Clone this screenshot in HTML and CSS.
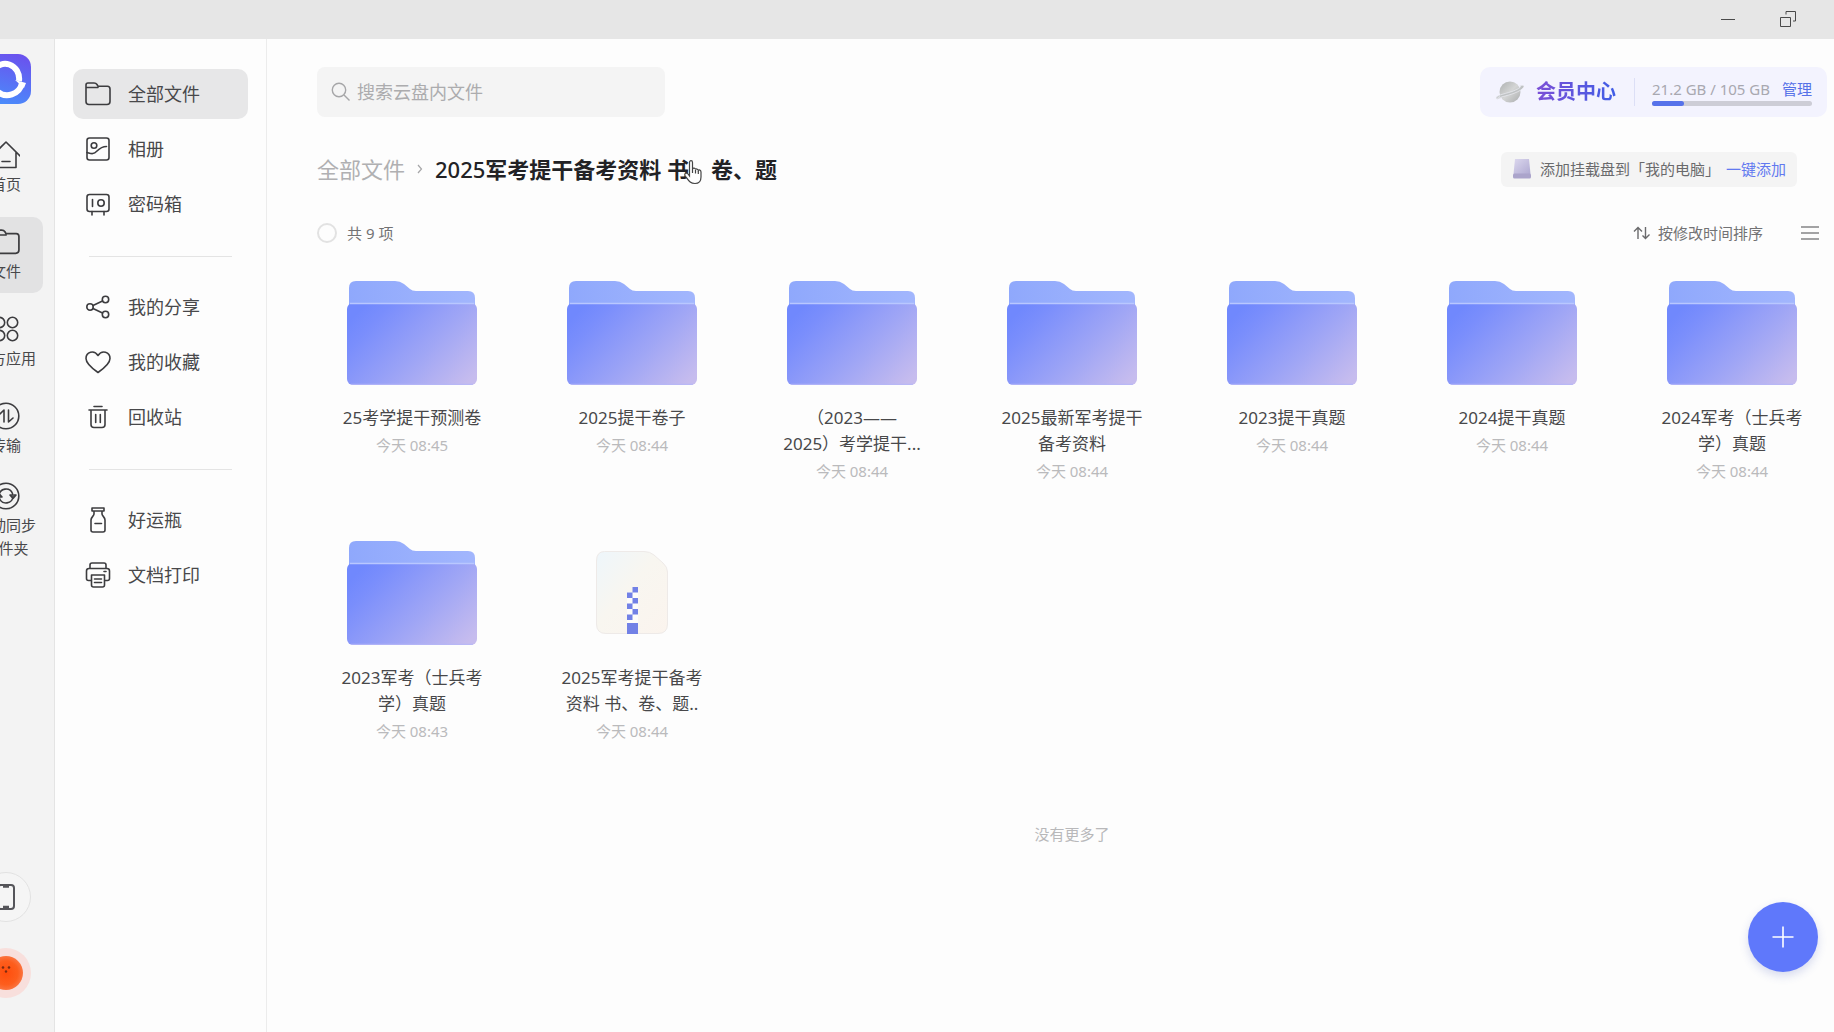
FILE: index.html
```html
<!DOCTYPE html>
<html lang="zh-CN">
<head>
<meta charset="utf-8">
<title>云盘</title>
<link rel="stylesheet" href="styles.css">
</head>
<body>
<svg class="defs" width="0" height="0" aria-hidden="true">
  <defs>
    <linearGradient id="back" x1="0" y1="0" x2="1" y2="0"><stop offset="0" stop-color="#8fa8fc"/><stop offset="1" stop-color="#a2b6fd"/></linearGradient>
    <linearGradient id="front" x1="0" y1="0.25" x2="1" y2="0.85"><stop offset="0" stop-color="#7088fd"/><stop offset="0.15" stop-color="#7a8efc"/><stop offset="0.6" stop-color="#a0a6f5"/><stop offset="1" stop-color="#c6bcee"/></linearGradient>
    <linearGradient id="sheet" x1="0" y1="0" x2="1" y2="1"><stop offset="0" stop-color="#eef6fb"/><stop offset="0.45" stop-color="#f8f6f0"/><stop offset="1" stop-color="#fbf4ee"/></linearGradient>
    <linearGradient id="logo" x1="0.7" y1="0" x2="0.4" y2="1"><stop offset="0" stop-color="#6a52ee"/><stop offset="1" stop-color="#4a8cfb"/></linearGradient>
    <linearGradient id="planet" x1="0" y1="0" x2="1" y2="1"><stop offset="0" stop-color="#adb0b0"/><stop offset="0.5" stop-color="#d4d5d5"/><stop offset="1" stop-color="#aaacad"/></linearGradient>
    <linearGradient id="disk" x1="0" y1="0" x2="1" y2="1"><stop offset="0" stop-color="#dcd8ee"/><stop offset="1" stop-color="#b0aad2"/></linearGradient>
    <radialGradient id="face"><stop offset="0" stop-color="#ff4d0c"/><stop offset="0.7" stop-color="#fd5e1d"/><stop offset="1" stop-color="#fb7440"/></radialGradient>
    <symbol id="folder-big" viewBox="0 0 130 104">
      <path d="M2 30V7Q2 0 9 0H48Q53 0 57 3L63 8Q65 10 69 10H121Q128 10 128 17V30Z" fill="url(#back)"/>
      <rect y="22" width="130" height="82" rx="6" fill="url(#front)"/>
      <path d="M3 22.500H127" stroke="#b9c7ff" stroke-width="1.500"/>
      <path d="M4 103.300H126" stroke="#b6b7f8"/>
    </symbol>
    <symbol id="folder" viewBox="0 0 26 26"><path d="M1 20V4Q1 2 3 2H9Q11 2 12 3.500L13 5.200H22.500Q25 5.200 25 8V20.500Q25 23.500 22 23.500H4Q1 23.500 1 20.500V6.500H13"/></symbol>
  </defs>
</svg>

<header class="titlebar">
  <button class="win-btn" aria-label="最小化"><svg width="16" height="16" viewBox="0 0 16 16"><path d="M1 8.500H15"/></svg></button>
  <button class="win-btn" aria-label="还原"><svg width="16" height="16" viewBox="0 0 16 16"><path d="M.5 6.500H10.500V15.500H.5ZM6 3.500V.5H15.500V10H13"/></svg></button>
</header>

<div class="app">
  <nav class="rail" aria-label="主导航">
    <svg class="logo" width="50" height="50" viewBox="0 0 50 50"><rect width="50" height="50" rx="13" fill="url(#logo)"/><path d="M38 27A14 15 0 1 0 16 37A15 15 0 0 0 41 29" fill="none" stroke="#fff" stroke-width="6"/><path d="M34 26L45 29L43 34Z" fill="#fff"/></svg>
    <a class="rail-item" href="#"><svg class="line" width="28" height="28" viewBox="0 0 28 28"><path d="M0 15L14 1L28 15M4 11.500V26.500H24V11.500M10 20.500H18"/></svg><span>首页</span></a>
    <a class="rail-item active" href="#"><svg class="line" width="28" height="28"><use href="#folder"/></svg><span>文件</span></a>
    <a class="rail-item" href="#"><svg class="line" width="28" height="28" viewBox="0 0 28 28"><circle cx="7.500" cy="7.500" r="5.200"/><circle cx="20.500" cy="7.500" r="5.200"/><circle cx="7.500" cy="20.500" r="5.200"/><circle cx="20.500" cy="20.500" r="5.200"/></svg><span>三方应用</span></a>
    <a class="rail-item" href="#"><svg class="line" width="28" height="28" viewBox="0 0 28 28"><circle cx="14" cy="14" r="12.800"/><path d="M8 12L12 8V20M16.500 8V20L21 16"/></svg><span>传输</span></a>
    <a class="rail-item tall" href="#"><svg class="line" width="28" height="28" viewBox="0 0 28 28"><circle cx="14" cy="14" r="12.800"/><path d="M7 13.500A7 7 0 0 1 20.500 11.500M21 14.500A7 7 0 0 1 7.500 16.500M18 13H24L21 16.500ZM4 15H10L7 11.500Z"/></svg><span>自动同步<br>文件夹</span></a>
    <div class="rail-foot">
      <button class="phone" aria-label="手机端"><svg width="18" height="26" viewBox="0 0 18 26"><rect x="1" y="1" width="16" height="24" rx="3"/><path d="M6 2.500H12M6 23H12" stroke-width="2.500"/></svg></button>
      <button class="avatar" aria-label="账号"><svg width="34" height="34" viewBox="0 0 34 34"><circle cx="17" cy="17" r="17" fill="url(#face)"/><circle cx="14" cy="11.500" r="1.300" fill="#7c2c12"/><circle cx="20" cy="11.500" r="1.300" fill="#7c2c12"/><circle cx="17" cy="15.500" r="1.200" fill="#7c2c12"/></svg></button>
    </div>
  </nav>

  <nav class="sidebar" aria-label="文件分类">
    <div class="group">
      <a class="side-item active" href="#"><svg class="line" width="26" height="26"><use href="#folder"/></svg>全部文件</a>
      <a class="side-item" href="#"><svg class="line" width="26" height="26" viewBox="0 0 26 26"><rect x="2" y="2" width="22" height="22" rx="2.500"/><circle cx="9" cy="9.500" r="2.800"/><path d="M2 16.500C6 17.500 8 19 12 15C15 12 17 10.500 21.500 10.500"/></svg>相册</a>
      <a class="side-item" href="#"><svg class="line" width="26" height="26" viewBox="0 0 26 26"><rect x="2" y="3.500" width="22" height="17" rx="2.500"/><circle cx="16" cy="12" r="3.200"/><path d="M7.500 8.500V15.500M7 20.500V24M19 20.500V24"/></svg>密码箱</a>
    </div>
    <div class="group">
      <a class="side-item" href="#"><svg class="line" width="26" height="26" viewBox="0 0 26 26"><circle cx="5" cy="13" r="3.200"/><circle cx="20.500" cy="5.500" r="3.200"/><circle cx="20.500" cy="20.500" r="3.200"/><path d="M8 11.500L17.500 7M8 14.500L17.500 19"/></svg>我的分享</a>
      <a class="side-item" href="#"><svg class="line" width="26" height="26" viewBox="0 0 26 26"><path d="M13 23.500C8 20 1 15 1 9.500C1 3 9 .5 13 6.500C17 .5 25 3 25 9.500C25 15 18 20 13 23.500Z"/></svg>我的收藏</a>
      <a class="side-item" href="#"><svg class="line" width="26" height="26" viewBox="0 0 26 26"><path d="M9 2.500H17M4 6H22M6 6V20.500Q6 23.500 9 23.500H17Q20 23.500 20 20.500V6M10.700 10.500V18.500M15.300 10.500V18.500"/></svg>回收站</a>
    </div>
    <div class="group">
      <a class="side-item" href="#"><svg class="line" width="26" height="26" viewBox="0 0 26 26"><path d="M7 1H19V4H7ZM9 4.500V7C9 9 6 10 6 13V23Q6 25 8 25H18Q20 25 20 23V13C20 10 17 9 17 7V4.500M10 16.500H16.500"/></svg>好运瓶</a>
      <a class="side-item" href="#"><svg class="line" width="26" height="26" viewBox="0 0 26 26"><path d="M5 6.500V3Q5 1 7 1H19Q21 1 21 3V6.500M6 18.500H3.500Q1.500 18.500 1.500 16.500V9Q1.500 6.500 4 6.500H22Q24.500 6.500 24.500 9V16.500Q24.500 18.500 22.500 18.500H20M6.500 13H19.500V23Q19.500 25 17.500 25H8.500Q6.500 25 6.500 23ZM9.500 17H16.500M9.500 20.500H16.500M19 9.500H21"/></svg>文档打印</a>
    </div>
  </nav>

  <main class="main">
    <div class="top">
      <label class="search"><svg width="20" height="20" viewBox="0 0 20 20"><circle cx="8" cy="8" r="6.700"/><path d="M13 13L18.500 18.500"/></svg><input type="search" placeholder="搜索云盘内文件" aria-label="搜索云盘内文件"></label>
      <section class="member">
        <a class="vip" href="#"><svg width="30" height="24" viewBox="0 0 30 24"><circle cx="15" cy="12" r="10.500" fill="url(#planet)"/><path d="M5 16C0 20 2 18 10 16C20 13.500 28 10 29 6.500C29 5 26 5 24 6C28 6 24 9 17 11.500C8 14.500 1 15 1 18.500Q2 20 6 18" fill="#bfc2c3" stroke="#f4f4fb" stroke-width=".6"/></svg><span>会员中心</span></a>
        <div class="quota">
          <div class="quota-row"><span>21.2 GB / 105 GB</span><a href="#">管理</a></div>
          <div class="bar"><div class="fill" style="width:20%"></div></div>
        </div>
      </section>
    </div>

    <div class="path-row">
      <nav class="crumbs" aria-label="路径"><a href="#">全部文件</a><svg width="6" height="10" viewBox="0 0 6 10"><path d="M1 1L4.500 5L1 9"/></svg><h1><span>2025</span>军考提干备考资料 书、卷、题
        <svg class="cursor" width="20" height="26" viewBox="0 0 20 26"><path d="M6.500 14V3.500C6.500 1 9.500 1 9.500 3.500V10C10 8.500 12.500 9 12.500 10.500C13 9.500 15 10 15.300 11.500C16 10.500 18 11 18 13V18C18 22 16 24.500 12 24.500C7 24.500 6 22 2 16.500C1 14.500 3.500 13 5 15L6.500 17Z"/><path d="M9.500 10V14M12.500 11V14.500M15.300 12V15"/></svg></h1></nav>
      <div class="mount"><svg width="20" height="20" viewBox="0 0 20 20"><path d="M3 0H17L18.500 15H1.500Z" fill="url(#disk)"/><rect x="1" y="14.500" width="18" height="5" rx="1.500" fill="#aba4cb"/></svg><span>添加挂载盘到「我的电脑」</span><a href="#">一键添加</a></div>
    </div>

    <div class="tools">
      <label class="check"><input type="checkbox">共 9 项</label>
      <button class="sort"><svg width="18" height="14" viewBox="0 0 18 14"><path d="M1 5.500L5 1.500L9 5.500M5 1.500V13M12.500 1V12.500M9.500 9.500L12.500 12.500L16.500 8.500"/></svg>按修改时间排序</button>
      <button class="view" aria-label="列表视图"><svg width="18" height="14" viewBox="0 0 18 14"><path d="M0 1H18M0 7H18M0 13H18"/></svg></button>
    </div>

    <ul class="files">
      <li><svg class="thumb" width="130" height="104"><use href="#folder-big"/></svg><a href="#">25考学提干预测卷</a><time>今天 08:45</time></li>
      <li><svg class="thumb" width="130" height="104"><use href="#folder-big"/></svg><a href="#">2025提干卷子</a><time>今天 08:44</time></li>
      <li><svg class="thumb" width="130" height="104"><use href="#folder-big"/></svg><a href="#">（2023——<br>2025）考学提干...</a><time>今天 08:44</time></li>
      <li><svg class="thumb" width="130" height="104"><use href="#folder-big"/></svg><a href="#">2025最新军考提干<br>备考资料</a><time>今天 08:44</time></li>
      <li><svg class="thumb" width="130" height="104"><use href="#folder-big"/></svg><a href="#">2023提干真题</a><time>今天 08:44</time></li>
      <li><svg class="thumb" width="130" height="104"><use href="#folder-big"/></svg><a href="#">2024提干真题</a><time>今天 08:44</time></li>
      <li><svg class="thumb" width="130" height="104"><use href="#folder-big"/></svg><a href="#">2024军考（士兵考<br>学）真题</a><time>今天 08:44</time></li>
      <li><svg class="thumb" width="130" height="104"><use href="#folder-big"/></svg><a href="#">2023军考（士兵考<br>学）真题</a><time>今天 08:43</time></li>
      <li><svg class="thumb" width="130" height="104" viewBox="0 0 130 104"><path d="M37.500 10.500H77Q83 10.500 87 14L96 22Q100.500 26 100.500 31V83Q100.500 92.500 91 92.500H39Q29.500 92.500 29.500 83V20Q29.500 10.500 37.500 10.500Z" fill="url(#sheet)" stroke="#eeeae8"/><path d="M60 51H71V92H60Z" fill="#fff" opacity=".7"/><path d="M65.500 46H71V51.500H65.500ZM60 51.500H65.500V57H60ZM65.500 57H71V62.500H65.500ZM60 62.500H65.500V68H60ZM65.500 68H71V73.500H65.500ZM60 73.500H65.500V79H60ZM60 82H71V93H60Z" fill="#7281e6"/></svg><a href="#">2025军考提干备考<br>资料 书、卷、题..</a><time>今天 08:44</time></li>
    </ul>
    <p class="end">没有更多了</p>
  </main>
</div>
<button class="fab" aria-label="新建"><svg width="22" height="22" viewBox="0 0 22 22"><path d="M11 0.500V21.500M.5 11H21.500"/></svg></button>
</body>
</html>
```
FILE: styles.css
```css
* { box-sizing: border-box; }
body {
  margin: 0;
  min-height: 100vh;
  display: flex;
  flex-direction: column;
  overflow: hidden;
  background: #fdfdfd;
  color: #48484a;
  font: 18px/26px "Noto Sans", "Noto Sans CJK SC", sans-serif;
}
a { color: inherit; text-decoration: none; }
button { border: 0; padding: 0; background: none; font: inherit; color: inherit; display: flex; align-items: center; justify-content: center; }
svg { display: block; flex: none; fill: none; }
.defs { position: absolute; }

.titlebar { height: 39px; background: #e6e6e6; display: flex; justify-content: flex-end; padding-right: 16px; }
.win-btn { width: 60px; height: 37px; }
.win-btn svg { stroke: #4a4a4a; }

.app { flex: 1; display: flex; }
.line { stroke: #3c3c3f; stroke-width: 1.6; stroke-linecap: round; stroke-linejoin: round; }

/* The rail sits partly beyond the window's left edge */
.rail {
  width: 97px;
  margin-left: -42px;
  flex: none;
  padding: 15px 12px 34px;
  background: #f3f3f3;
  border-right: 1px solid #e4e4e4;
  display: flex;
  flex-direction: column;
  align-items: center;
  gap: 11px;
}
.logo { margin-bottom: 15px; }
.rail-item {
  width: 74px;
  min-height: 76px;
  display: flex;
  flex-direction: column;
  align-items: center;
  justify-content: center;
  gap: 4px;
  border-radius: 10px;
  font-size: 15px;
  line-height: 23px;
  text-align: center;
  white-space: nowrap;
}
.rail-item.active { background: #e2e2e3; }
.rail-item.tall { padding-top: 4px; }
.rail-foot { margin-top: auto; display: flex; flex-direction: column; gap: 26px; }
.phone, .avatar { width: 50px; height: 50px; border-radius: 50%; }
.phone { border: 1px solid #e2e2e2; background: #f5f5f5; }
.phone svg { stroke: #55555a; stroke-width: 2; }
.avatar { background: #f8dfdc; }

.sidebar { width: 212px; flex: none; padding: 30px 18px; border-right: 1px solid #ececec; }
.group { display: flex; flex-direction: column; gap: 5px; }
.group + .group::before { content: ""; height: 1px; margin: 27px 16px 20px; background: #e4e4e4; }
.side-item { height: 50px; padding: 0 12px; display: flex; align-items: center; gap: 17px; border-radius: 10px; }
.side-item.active { background: #e7e7e8; }

.main { flex: 1; min-width: 0; padding: 28px 7px 0 50px; }
.top { display: flex; justify-content: space-between; }
.search { width: 348px; height: 50px; padding: 0 14px; display: flex; align-items: center; gap: 6px; border-radius: 8px; background: #f4f4f4; }
.search svg { stroke: #a6a6a8; stroke-width: 1.4; }
.search input { flex: 1; min-width: 0; border: 0; outline: 0; padding: 0; background: none; font: inherit; }
.search input::placeholder { color: #acacae; opacity: 1; }

.member { height: 50px; padding: 0 15px; display: flex; align-items: center; border-radius: 10px; background: #f3f3fe; }
.vip { height: 28px; padding-right: 18px; display: flex; align-items: center; gap: 11px; border-right: 1px solid #dcdff6; font-size: 20px; line-height: 30px; font-weight: 700; }
.vip span { color: transparent; background: linear-gradient(90deg, #7b4fd6, #3f5de6); background-clip: text; -webkit-background-clip: text; }
.quota { width: 160px; margin-left: 17px; font-size: 15px; }
.quota-row { display: flex; justify-content: space-between; line-height: 24px; white-space: nowrap; color: #a8a8b0; }
.quota-row a { color: #5671e8; }
.bar { height: 5px; margin-bottom: 2px; border-radius: 3px; background: #cdcdd6; }
.fill { height: 5px; border-radius: 3px; background: #5672ea; }

.path-row { margin-top: 34px; padding-right: 30px; display: flex; align-items: center; justify-content: space-between; }
.crumbs { display: flex; align-items: center; gap: 12px; font-size: 22px; line-height: 36px; color: #b0b0b2; white-space: nowrap; }
.crumbs > svg { stroke: #a6a6a8; stroke-width: 1.2; }
h1 { position: relative; margin: 0; font-size: 22px; font-weight: 700; color: #222225; }
h1 span { font-weight: 500; }
.cursor { position: absolute; left: 248px; top: 8px; fill: #fff; stroke: #444; stroke-width: 1.2; }
.mount { height: 35px; padding: 0 11px; display: flex; align-items: center; font-size: 15px; color: #6a6a6c; background: #f4f4f4; border-radius: 6px; white-space: nowrap; }
.mount span { margin: 0 6px 0 8px; }
.mount a { color: #6279f0; }

.tools { margin-top: 33px; padding-right: 8px; display: flex; align-items: center; font-size: 15px; color: #727274; }
.check { display: flex; align-items: center; gap: 10px; margin-right: auto; }
.check input { appearance: none; width: 20px; height: 20px; margin: 0; border: 2px solid #e2e2e2; border-radius: 50%; }
.sort { gap: 7px; margin-right: 38px; }
.sort svg { stroke: #6a6a6c; stroke-width: 1.4; }
.view svg { stroke: #858587; stroke-width: 1.4; }

.files {
  margin: 35px 0 0;
  padding: 0 20px;
  list-style: none;
  display: grid;
  grid-template-columns: repeat(auto-fill, 150px);
  justify-content: space-between;
  gap: 57px 60px;
}
.files li { min-height: 203px; display: flex; flex-direction: column; align-items: center; text-align: center; white-space: nowrap; }
.files a { margin-top: 20px; font-size: 17px; }
.files time { margin-top: 1px; font-size: 15px; color: #bababc; }
.end { margin: 77px 0 0; font-size: 15px; text-align: center; color: #b8b8ba; padding: 0 20px; }

.fab { position: fixed; right: 16px; bottom: 60px; width: 70px; height: 70px; border-radius: 50%; background: #5f78fb; box-shadow: 0 4px 10px rgba(60, 80, 180, .2); }
.fab svg { stroke: #fff; stroke-width: 1.6; }
```
